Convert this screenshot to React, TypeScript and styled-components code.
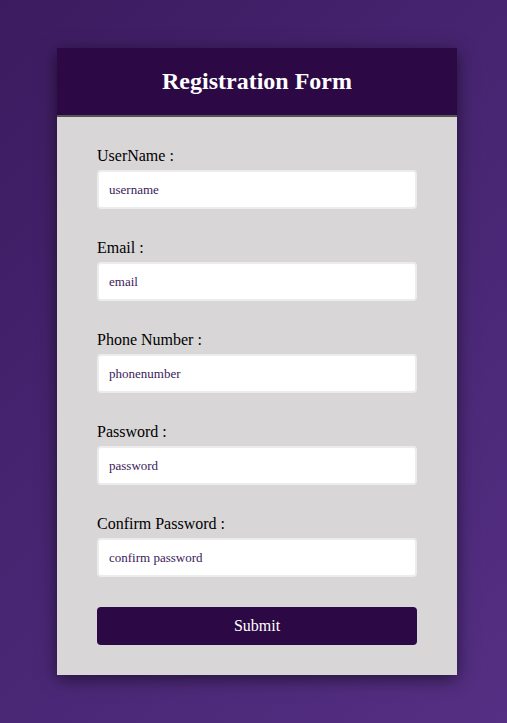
import React from "react";
import styled, { createGlobalStyle } from "styled-components";

const Global = createGlobalStyle`
  html, body { margin: 0; padding: 0; }
  body {
    min-height: 100vh;
    background: linear-gradient(135deg, #3d1b60 0%, #482673 50%, #552f83 100%);
    font-family: "Liberation Serif", "Times New Roman", serif;
  }
  #root { min-height: 100vh; }
`;

const Page = styled.div`
  min-height: 100vh;
  display: flex;
  justify-content: center;
  align-items: flex-start;
  padding: 48px 0 0 7px;
  box-sizing: border-box;
`;

const Card = styled.div`
  width: 400px;
  background: #d8d6d7;
  box-shadow: 0 4px 16px rgba(0, 0, 0, 0.55);
`;

const Header = styled.div`
  background: #2c0845;
  height: 67px;
  border-bottom: 2px solid #555;
  display: flex;
  align-items: center;
  justify-content: center;
`;

const Title = styled.h2`
  margin: 0;
  color: #fff;
  font-size: 24px;
  font-weight: bold;
`;

const Form = styled.form`
  padding: 28px 40px 30px;
  display: flex;
  flex-direction: column;
`;

const Field = styled.div`
  display: flex;
  flex-direction: column;
  margin-bottom: 28px;
`;

const Label = styled.label`
  font-size: 16px;
  line-height: 18px;
  padding-top: 2px;
  color: #000;
  margin-bottom: 5px;
`;

const Input = styled.input`
  box-sizing: border-box;
  height: 39px;
  width: 100%;
  border: 2px solid #ececec;
  border-radius: 4px;
  background: #fff;
  padding: 0 10px;
  font-family: "Liberation Serif", "Times New Roman", serif;
  font-size: 13px;
  color: #3b1a5a;
  outline: none;
  &::placeholder { color: #3b1a5a; opacity: 1; }
`;

const Button = styled.button`
  margin-top: 2px;
  height: 38px;
  border: none;
  border-radius: 4px;
  background: #2c0845;
  color: #fff;
  font-family: "Liberation Serif", "Times New Roman", serif;
  font-size: 16px;
  cursor: pointer;
`;

const fields = [
  { label: "UserName :", ph: "username", type: "text" },
  { label: "Email :", ph: "email", type: "email" },
  { label: "Phone Number :", ph: "phonenumber", type: "text" },
  { label: "Password :", ph: "password", type: "password" },
  { label: "Confirm Password :", ph: "confirm password", type: "password" },
];

export default function App() {
  return (
    <>
      <Global />
      <Page>
        <Card>
          <Header>
            <Title>Registration Form</Title>
          </Header>
          <Form onSubmit={(e) => e.preventDefault()}>
            {fields.map((f) => (
              <Field key={f.ph}>
                <Label>{f.label}</Label>
                <Input type={f.type} placeholder={f.ph} />
              </Field>
            ))}
            <Button type="submit">Submit</Button>
          </Form>
        </Card>
      </Page>
    </>
  );
}
